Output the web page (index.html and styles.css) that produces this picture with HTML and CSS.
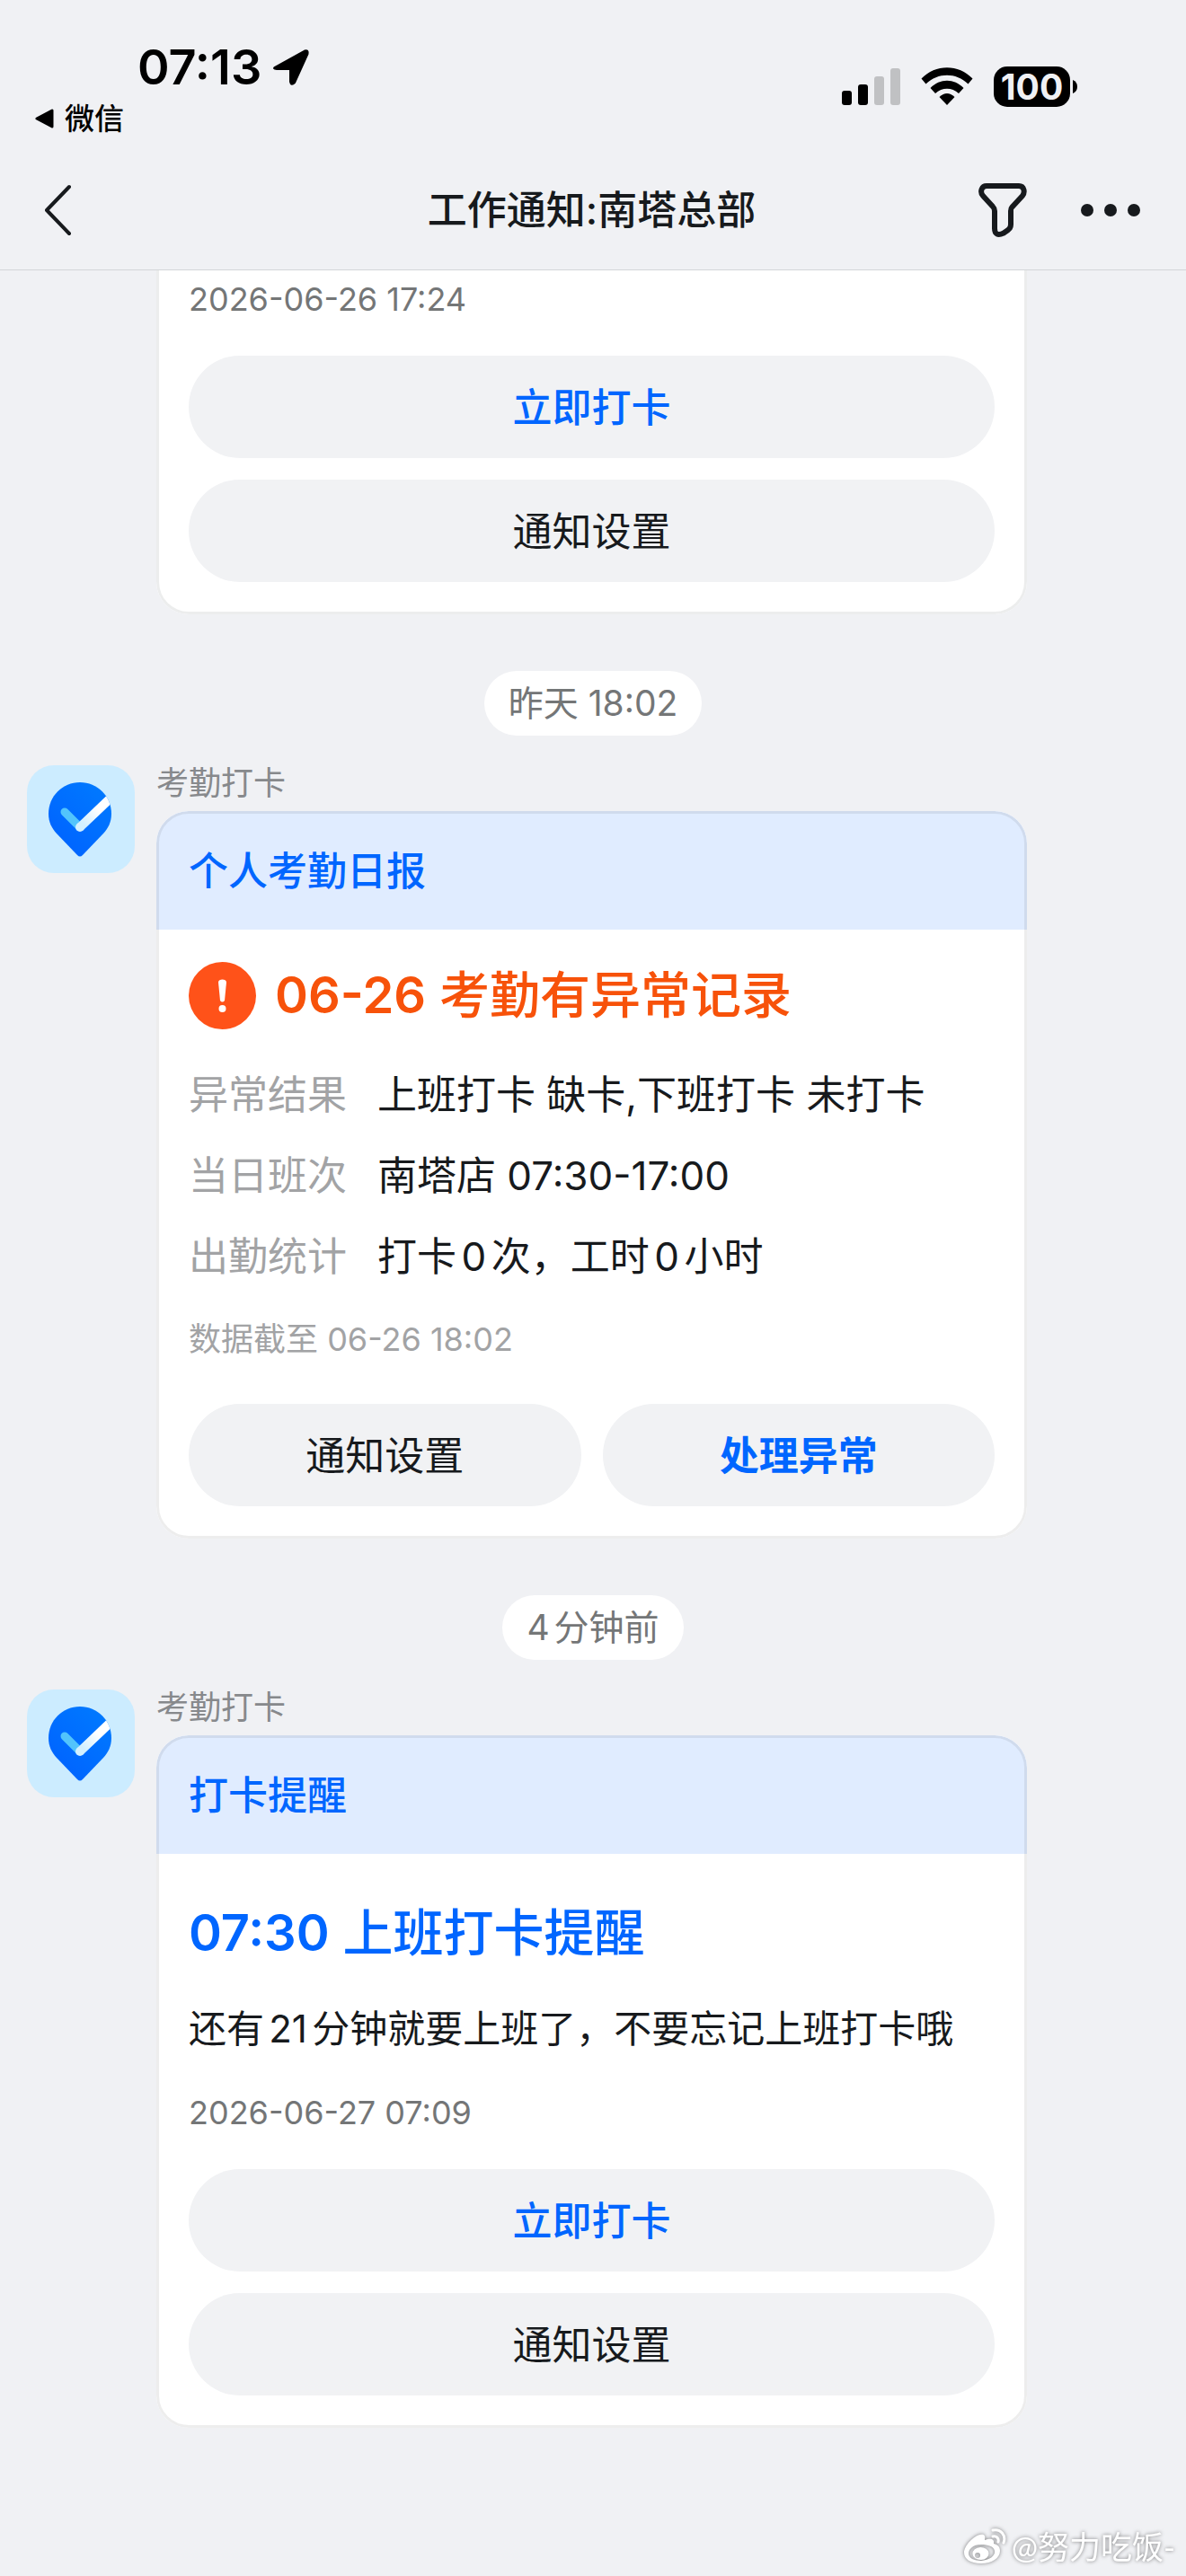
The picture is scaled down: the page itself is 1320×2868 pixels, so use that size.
FILE: index.html
```html
<!DOCTYPE html>
<html lang="zh-CN">
<head>
    <meta charset="UTF-8">
    <meta name="viewport" content="width=device-width, initial-scale=1.0">
    <title>工作通知:南塔总部</title>
    <link rel="stylesheet" href="styles.css">
</head>
<body>
    <!-- 头像图标，两条消息共用 -->
    <svg class="defs" width="0" height="0">
        <defs>
            <linearGradient id="pinFill" x1="0" y1="1" x2="1" y2="0">
                <stop offset="0" stop-color="#0058ff"/>
                <stop offset="1" stop-color="#0084ff"/>
            </linearGradient>
            <linearGradient id="tickFill" x1="0" y1="1" x2="1" y2="0">
                <stop offset="0" stop-color="#c9ecff"/>
                <stop offset="0.5" stop-color="#ffffff"/>
            </linearGradient>
            <clipPath id="pinClip">
                <path d="M59 19C78.500 19 94 34.500 94 54C94 63 90.500 70 85 76L62 100Q59 103 56 100L33 76C27.500 70 24 63 24 54C24 34.500 39.500 19 59 19Z"/>
            </clipPath>
            <symbol id="pin" viewBox="0 0 120 120">
                <g clip-path="url(#pinClip)">
                    <rect width="120" height="120" fill="url(#pinFill)"/>
                    <path d="M42 52L58 68" stroke="#52c4fc" stroke-width="9" stroke-linecap="round"/>
                    <path d="M59 69L100 30" stroke="url(#tickFill)" stroke-width="10"/>
                    <circle cx="59" cy="69" r="5" fill="#d3f0ff"/>
                </g>
            </symbol>
        </defs>
    </svg>

    <header class="header">
        <div class="status-bar">
            <div class="status-left">
                <div class="clock">
                    <span>07:13</span>
                    <svg width="42" height="42" viewBox="0 0 42 42"><path d="M3.500 20.500L36 2.500Q40.500 1 39.500 6L25 38Q21 42 20 37V23H5Q0 22.500 3.500 20.500Z" stroke="#000" stroke-width="2" stroke-linejoin="round"/></svg>
                </div>
                <a class="back-app" href="#">
                    <svg width="21" height="22" viewBox="0 0 21 22"><path d="M2 11L19 2V20Z" stroke="#000" stroke-width="3" stroke-linejoin="round"/></svg>
                    <span>微信</span>
                </a>
            </div>
            <div class="status-right">
                <svg width="65" height="42" viewBox="0 0 65 42">
                    <rect x="0" y="26" width="11" height="16" rx="3"/>
                    <rect x="18" y="19" width="11" height="23" rx="3"/>
                    <rect x="36" y="10" width="11" height="32" rx="3" fill="#c0c1c3"/>
                    <rect x="54" y="1" width="11" height="41" rx="3" fill="#c0c1c3"/>
                </svg>
                <svg width="58" height="42" viewBox="0 0 58 42">
                    <path d="M0.500 12.500C16 -4 42 -4 57.500 12.500L52.500 18.500C39 5.500 19 5.500 5.500 18.500Z"/>
                    <path d="M10.500 23C21 12 37 12 47.500 23L42 29C34.500 22 23.500 22 16 29Z"/>
                    <path d="M20.500 33Q29 25 37.500 33L29 42Z"/>
                </svg>
                <div class="battery">
                    <span class="battery-level">100</span>
                    <svg width="5" height="15" viewBox="0 0 5 15"><path d="M0 0Q5 2 5 7.500T0 15Z"/></svg>
                </div>
            </div>
        </div>
        <nav class="nav-bar">
            <button class="icon-button" aria-label="返回">
                <svg width="32" height="58" viewBox="0 0 32 58"><path d="M29 3L4 29L29 55" fill="none" stroke="#171a1d" stroke-width="4" stroke-linecap="round" stroke-linejoin="round"/></svg>
            </button>
            <h1 class="title">工作通知:南塔总部</h1>
            <div class="nav-actions">
                <button class="icon-button" aria-label="筛选">
                    <svg width="54" height="60" viewBox="0 0 54 60"><path d="M9 3H45C51 3 52 10 49 14L37 27Q36 28 36 31V46Q36 50 33 52L28 55.500Q18 60 18 50V31Q18 28 16 26L5 14C1 9 4 3 9 3Z" fill="none" stroke="#171a1d" stroke-width="6" stroke-linejoin="round"/></svg>
                </button>
                <button class="icon-button" aria-label="更多">
                    <svg width="66" height="14" viewBox="0 0 66 14" fill="#171a1d"><circle cx="7" cy="7" r="7"/><circle cx="33" cy="7" r="7"/><circle cx="59" cy="7" r="7"/></svg>
                </button>
            </div>
        </nav>
    </header>

    <main class="messages">
        <div class="message">
            <article class="card card-cut">
                <div class="card-body">
                    <p class="date">2026-06-26 17:24</p>
                    <div class="buttons">
                        <button class="button primary">立即打卡</button>
                        <button class="button">通知设置</button>
                    </div>
                </div>
            </article>
        </div>

        <time class="time-pill">昨天 18:02</time>

        <div class="message">
            <div class="avatar"><svg viewBox="0 0 120 120"><use href="#pin"/></svg></div>
            <div class="sender">考勤打卡</div>
            <article class="card">
                <h2 class="card-header">个人考勤日报</h2>
                <div class="card-body">
                    <h3 class="headline warning">
                        <svg width="75" height="75" viewBox="0 0 75 75">
                            <circle cx="37.500" cy="37.500" r="37.500" fill="#ff5219"/>
                            <path d="M33 22.500C33 18.500 42 18.500 42 22.500L40 43Q37.500 46 35 43Z" fill="#fff"/>
                            <circle cx="37.500" cy="52" r="4" fill="#fff"/>
                        </svg>
                        <span><b>06-26</b> 考勤有异常记录</span>
                    </h3>
                    <dl class="details">
                        <dt>异常结果</dt>
                        <dd>上班打卡 缺卡,下班打卡 未打卡</dd>
                        <dt>当日班次</dt>
                        <dd>南塔店 07:30-17:00</dd>
                        <dt>出勤统计</dt>
                        <dd class="spaced">打卡0次，工时0小时</dd>
                    </dl>
                    <p class="date faint">数据截至 06-26 18:02</p>
                    <div class="buttons row">
                        <button class="button">通知设置</button>
                        <button class="button primary strong">处理异常</button>
                    </div>
                </div>
            </article>
        </div>

        <time class="time-pill spaced">4分钟前</time>

        <div class="message">
            <div class="avatar"><svg viewBox="0 0 120 120"><use href="#pin"/></svg></div>
            <div class="sender">考勤打卡</div>
            <article class="card">
                <h2 class="card-header">打卡提醒</h2>
                <div class="card-body">
                    <h3 class="headline reminder"><b>07:30</b> 上班打卡提醒</h3>
                    <p class="text spaced">还有21分钟就要上班了，不要忘记上班打卡哦</p>
                    <p class="date">2026-06-27 07:09</p>
                    <div class="buttons">
                        <button class="button primary">立即打卡</button>
                        <button class="button">通知设置</button>
                    </div>
                </div>
            </article>
        </div>
    </main>

    <footer class="watermark">
        <svg width="48" height="40" viewBox="0 0 48 40">
            <path fill-rule="evenodd" d="M19 7C24 6 25 9 24 13C30 11 35 11 34 17C38 18 41 20 41 25C41 33 32 39 20 39C8 39 1 34 1 27C1 19 12 8 19 7ZM20 18C11 18 6 23 6 28C6 33 12 36 20 36C29 35 36 31 35 25C34 20 28 18 20 18Z"/>
            <path fill-rule="evenodd" d="M19 21A9 7 0 1 0 20 35A9 7 0 1 0 19 21ZM16 27A3 3 0 1 1 16 33A3 3 0 1 1 16 27Z"/>
            <path d="M33 2C42 0 48 8 45 16M33 9C37 8 40 11 39 15" fill="none" stroke="#fff" stroke-width="3" stroke-linecap="round"/>
        </svg>
        <span>@努力吃饭-</span>
    </footer>
</body>
</html>
```

FILE: styles.css
```css
* {
    margin: 0;
    padding: 0;
    box-sizing: border-box;
}

body {
    display: flex;
    flex-direction: column;
    min-height: 100vh;
    background-color: #f0f1f4;
    color: #171a1d;
    font-family: Inter, "Noto Sans CJK SC", sans-serif;
    font-size: 44px;
    line-height: 60px;
    text-autospace: no-autospace;
}

button {
    border: none;
    background: none;
    color: inherit;
    font: inherit;
    cursor: pointer;
}

svg {
    display: block;
    flex: none;
}

.defs {
    position: absolute;
}

/* 中文和数字之间留空 */
.spaced {
    text-autospace: normal;
}

/* 顶部状态栏和导航 */
.header {
    border-bottom: 1px solid #d3d5d8;
}

.status-bar {
    display: flex;
    justify-content: space-between;
    padding: 45px 121px 0 39px;
    color: #000;
}

.clock {
    display: flex;
    align-items: center;
    gap: 12px;
    padding-left: 114px;
    font-size: 54px;
    font-weight: 600;
}

.back-app {
    display: flex;
    align-items: center;
    gap: 12px;
    margin-top: 3px;
    color: #000;
    font-size: 33px;
    font-weight: 500;
    line-height: 48px;
    text-decoration: none;
}

.status-right {
    display: flex;
    align-items: center;
    gap: 23px;
    height: 102px;
}

.battery {
    display: flex;
    align-items: center;
    gap: 3px;
}

.battery-level {
    width: 85px;
    border-radius: 15px;
    background-color: #000;
    color: #f0f1f4;
    font-size: 39px;
    font-weight: 700;
    line-height: 45px;
    text-align: center;
}

.nav-bar {
    display: grid;
    grid-template-columns: 1fr auto 1fr;
    align-items: center;
    padding: 12px 51px 0 48px;
    height: 144px;
}

.title {
    font-size: 44px;
    font-weight: 500;
}

.nav-actions {
    display: flex;
    align-items: center;
    justify-content: flex-end;
    gap: 60px;
}

/* 消息列表 */
.messages {
    display: flex;
    flex-direction: column;
    align-items: center;
}

.message {
    display: grid;
    grid-template-columns: 120px 1fr;
    column-gap: 24px;
    width: 100%;
    padding: 0 177px 0 30px;
}

.avatar {
    grid-row: 1 / 3;
    align-self: start;
    width: 120px;
    height: 120px;
    border-radius: 30px;
    background-color: #ccecff;
}

.sender {
    height: 51px;
    color: #87898c;
    font-size: 36px;
    line-height: 40px;
}

.card {
    position: relative;
    grid-column: 2;
    border-radius: 36px;
    background-color: #fff;
    overflow: hidden;
}

/* 边框压在标题底色上面 */
.card::after {
    content: "";
    position: absolute;
    inset: 0;
    border: 3px solid rgba(23, 26, 29, 0.08);
    border-radius: inherit;
    pointer-events: none;
}

.card-cut,
.card-cut::after {
    border-top: none;
    border-radius: 0 0 36px 36px;
}

.time-pill {
    margin: 63px 0 33px;
    padding: 0 27px;
    border-radius: 36px;
    background-color: #fff;
    color: #747677;
    font-size: 39px;
    line-height: 72px;
}

.card-header {
    padding: 37px 36px 35px;
    background-color: #e0ecff;
    color: #0066ff;
    font-size: 44px;
    font-weight: 500;
}

.card-body {
    padding: 0 36px 36px;
}

.headline {
    font-size: 56px;
    font-weight: 500;
    line-height: 75px;
}

.headline b {
    font-weight: 600;
}

.warning {
    display: flex;
    align-items: center;
    gap: 21px;
    padding-top: 36px;
    color: #f7520a;
}

.reminder {
    padding-top: 51px;
    color: #0066ff;
}

.details {
    display: grid;
    grid-template-columns: 210px 1fr;
    row-gap: 30px;
    padding-top: 43px;
}

.details dt {
    color: #a2a3a5;
}

.text {
    padding-top: 39px;
    font-size: 42px;
}

.date {
    padding-top: 39px;
    color: #747677;
    font-size: 36px;
    line-height: 48px;
}

.card-cut .date {
    padding-top: 8px;
}

.faint {
    padding-top: 38px;
    color: #a2a3a5;
}

.buttons {
    display: grid;
    gap: 24px;
    padding-top: 39px;
}

.row {
    grid-template-columns: 1fr 1fr;
    padding-top: 48px;
}

.button {
    height: 114px;
    padding-top: 2px;
    border-radius: 57px;
    background-color: #f1f2f4;
}

.primary {
    color: #0066ff;
    font-weight: 500;
}

.strong {
    font-weight: 700;
}

.watermark {
    display: flex;
    align-items: center;
    justify-content: flex-end;
    gap: 6px;
    margin-top: auto;
    padding: 0 12px 9px 0;
    color: #fff;
    fill: #fff;
    font-family: Lato, "Noto Sans CJK SC", sans-serif;
    font-size: 35px;
    line-height: 48px;
    filter: drop-shadow(0 0 2px rgba(0, 0, 0, 0.5));
}
```
